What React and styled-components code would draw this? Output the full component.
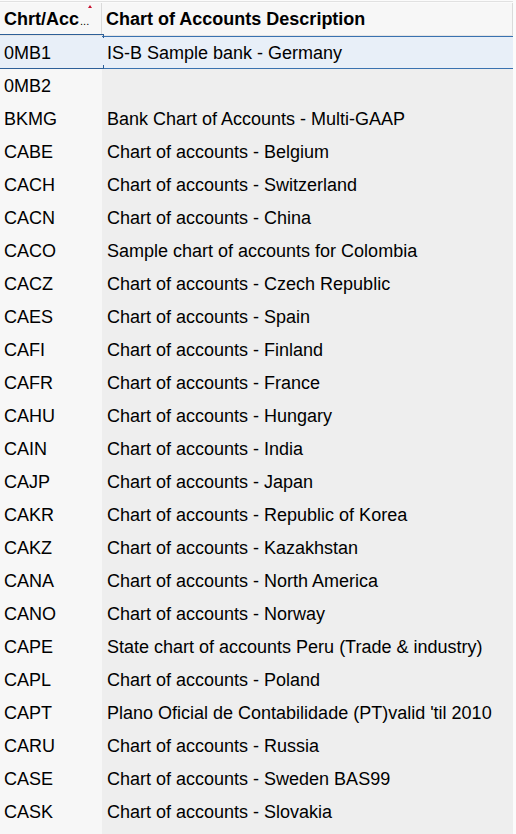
import React from "react";
import styled, { createGlobalStyle } from "styled-components";

const Global = createGlobalStyle`
  html, body { margin: 0; padding: 0; background: #ffffff; }
  body { font-family: "Liberation Sans", Arial, sans-serif; }
`;

const BLUE = "#3a72b0";
const FRAME = "#2d5f98";

const Page = styled.div`
  width: 516px;
  height: 834px;
  overflow: hidden;
  background: #fbfbfb;
  display: flex;
  flex-direction: column;
  font-family: "Liberation Sans", Arial, sans-serif;
  font-size: 18px;
  color: #000;
`;

const TopRule = styled.div`
  height: 1px;
  margin: 1px 0 1px;
  background: #e1e1e1;
  width: 513px;
  flex: none;
`;

const Table = styled.div`
  width: 513px;
  flex: 1;
  display: flex;
  flex-direction: column;
`;

const HeaderRow = styled.div`
  display: flex;
  height: 32px;
  border-bottom: 1px solid #e4e4e4;
  background: #f7f7f7;
  flex: none;
`;

const HeaderCell = styled.div`
  position: relative;
  box-sizing: border-box;
  width: ${(p) => p.$w}px;
  padding-left: ${(p) => p.$pad}px;
  padding-top: 1px;
  border-right: 1px solid #dadada;
  display: flex;
  align-items: center;
  font-weight: bold;
  white-space: nowrap;
  overflow: hidden;
`;

const Dots = styled.span`
  font-weight: normal;
  font-size: 11px;
  align-self: flex-end;
  margin-bottom: 8px;
  margin-left: 1px;
`;

const SortMark = styled.span`
  position: absolute;
  left: 88px;
  top: 2px;
  width: 0;
  height: 0;
  border-left: 2.5px solid transparent;
  border-right: 2.5px solid transparent;
  border-bottom: 3px solid #c8102e;
`;

const Body = styled.div`
  flex: 1;
  display: flex;
  flex-direction: column;
`;

const Row = styled.div`
  display: flex;
  height: 33px;
  flex: none;
  box-sizing: border-box;
`;

const Filler = styled.div`
  display: flex;
  flex: 1;
`;

const CodeCell = styled.div`
  position: relative;
  box-sizing: border-box;
  width: 102px;
  padding-left: 4px;
  padding-top: 2px;
  display: flex;
  align-items: center;
  white-space: nowrap;
  background: ${(p) => (p.$sel ? "#e8eff8" : "#f7f7f7")};
`;

const DescCell = styled.div`
  box-sizing: border-box;
  width: 411px;
  padding-left: 5px;
  padding-top: 2px;
  display: flex;
  align-items: center;
  white-space: nowrap;
  overflow: hidden;
  background: ${(p) => (p.$sel ? "#e8eff8" : "#eeeeee")};
  border-top: ${(p) => (p.$sel ? `1px solid ${BLUE}` : "none")};
  border-bottom: ${(p) => (p.$sel ? `1px solid ${BLUE}` : "none")};
`;

const FocusFrame = styled.span`
  position: absolute;
  left: 0;
  right: -2px;
  top: -2px;
  bottom: 0;
  border-top: 1px solid ${FRAME};
  border-bottom: 1px solid ${FRAME};
  pointer-events: none;
  &::before,
  &::after {
    content: "";
    position: absolute;
    right: 0;
    width: 1px;
    height: 3px;
    background: ${FRAME};
  }
  &::before { top: 0; }
  &::after { bottom: 0; }
`;

const rows = [
  ["0MB1", "IS-B Sample bank - Germany"],
  ["0MB2", ""],
  ["BKMG", "Bank Chart of Accounts - Multi-GAAP"],
  ["CABE", "Chart of accounts - Belgium"],
  ["CACH", "Chart of accounts - Switzerland"],
  ["CACN", "Chart of accounts - China"],
  ["CACO", "Sample chart of accounts for Colombia"],
  ["CACZ", "Chart of accounts - Czech Republic"],
  ["CAES", "Chart of accounts - Spain"],
  ["CAFI", "Chart of accounts - Finland"],
  ["CAFR", "Chart of accounts - France"],
  ["CAHU", "Chart of accounts - Hungary"],
  ["CAIN", "Chart of accounts - India"],
  ["CAJP", "Chart of accounts - Japan"],
  ["CAKR", "Chart of accounts - Republic of Korea"],
  ["CAKZ", "Chart of accounts - Kazakhstan"],
  ["CANA", "Chart of accounts - North America"],
  ["CANO", "Chart of accounts - Norway"],
  ["CAPE", "State chart of accounts Peru (Trade & industry)"],
  ["CAPL", "Chart of accounts - Poland"],
  ["CAPT", "Plano Oficial de Contabilidade (PT)valid 'til 2010"],
  ["CARU", "Chart of accounts - Russia"],
  ["CASE", "Chart of accounts - Sweden BAS99"],
  ["CASK", "Chart of accounts - Slovakia"],
];

export default function App() {
  return (
    <Page>
      <Global />
      <TopRule />
      <Table>
        <HeaderRow>
          <HeaderCell $w={102} $pad={4}>
            Chrt/Acc<Dots>...</Dots>
            <SortMark />
          </HeaderCell>
          <HeaderCell $w={411} $pad={4}>
            Chart of Accounts Description
          </HeaderCell>
        </HeaderRow>
        <Body>
          {rows.map(([code, desc], i) => {
            const sel = i === 0;
            return (
              <Row key={code}>
                <CodeCell $sel={sel}>
                  {code}
                  {sel && <FocusFrame />}
                </CodeCell>
                <DescCell $sel={sel}>{desc}</DescCell>
              </Row>
            );
          })}
          <Filler>
            <CodeCell />
            <DescCell />
          </Filler>
        </Body>
      </Table>
    </Page>
  );
}
